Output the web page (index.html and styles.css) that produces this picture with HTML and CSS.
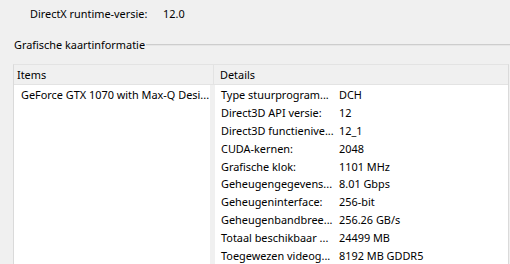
FILE: index.html
```html
<!DOCTYPE html>
<html>
<head>
	<title>Grafische kaartinformatie</title>
	<meta charset="utf-8">
	<link rel="stylesheet" href="styles.css">
</head>
<body>
	<div class="runtime">
		<span class="runtime-label">DirectX runtime-versie:</span>
		<span>12.0</span>
	</div>
	<div class="group">
		<span class="group-title">Grafische kaartinformatie</span>
		<span class="group-line"></span>
	</div>
	<div class="list">
		<div class="list-head">
			<div class="col-items">Items</div>
			<div class="col-details">Details</div>
		</div>
		<div class="list-body">
			<ul class="items">
				<li>GeForce GTX 1070 with Max-Q Desi...</li>
			</ul>
			<ul class="details">
				<li><span class="key">Type stuurprogram...</span><span>DCH</span></li>
				<li><span class="key">Direct3D API versie:</span><span>12</span></li>
				<li><span class="key">Direct3D functienive...</span><span>12_1</span></li>
				<li><span class="key">CUDA-kernen:</span><span>2048</span></li>
				<li><span class="key">Grafische klok:</span><span>1101 MHz</span></li>
				<li><span class="key">Geheugengegevens...</span><span>8.01 Gbps</span></li>
				<li><span class="key">Geheugeninterface:</span><span>256-bit</span></li>
				<li><span class="key">Geheugenbandbree...</span><span>256.26 GB/s</span></li>
				<li><span class="key">Totaal beschikbaar ...</span><span>24499 MB</span></li>
				<li><span class="key">Toegewezen videog...</span><span>8192 MB GDDR5</span></li>
			</ul>
		</div>
	</div>
</body>
</html>
```

FILE: styles.css
```css
body,div,ul,li{margin:0;padding:0;}
ul{list-style-type:none;}
body{background:#f0f0f0;color:#000;font:10.9px/18px "Noto Sans","Liberation Sans",sans-serif;overflow:hidden;white-space:nowrap;}
.runtime{display:flex;padding:5px 0 0 30px;height:18px;}
.runtime-label{width:133px;}
.group{display:flex;align-items:center;margin-top:13px;padding-left:14px;height:18px;}
.group-line{flex:1;height:0;border-top:1px solid #cdcdcd;border-bottom:1px solid #e6e6e6;margin-left:1px;}
.list{margin:10px 1px 0 13px;border-left:1px solid #dadada;border-top:1px solid #e3e3e3;border-right:1px solid #dadada;}
.list-head{display:flex;height:19px;line-height:19px;border-bottom:1px solid #e3e3e3;}
.col-items{width:196px;padding-left:3px;border-right:1px solid #e3e3e3;}
.col-details{flex:1;padding-left:6px;}
.list-body{display:flex;gap:5px;height:200px;}
.items{width:196px;background:#fff;padding:1px 0 0 7px;box-sizing:border-box;overflow:hidden;}
.details{flex:1;background:#fff;padding:1px 0 0 6px;}
.details li{display:flex;height:17.9px;}
.key{width:118px;}
```
